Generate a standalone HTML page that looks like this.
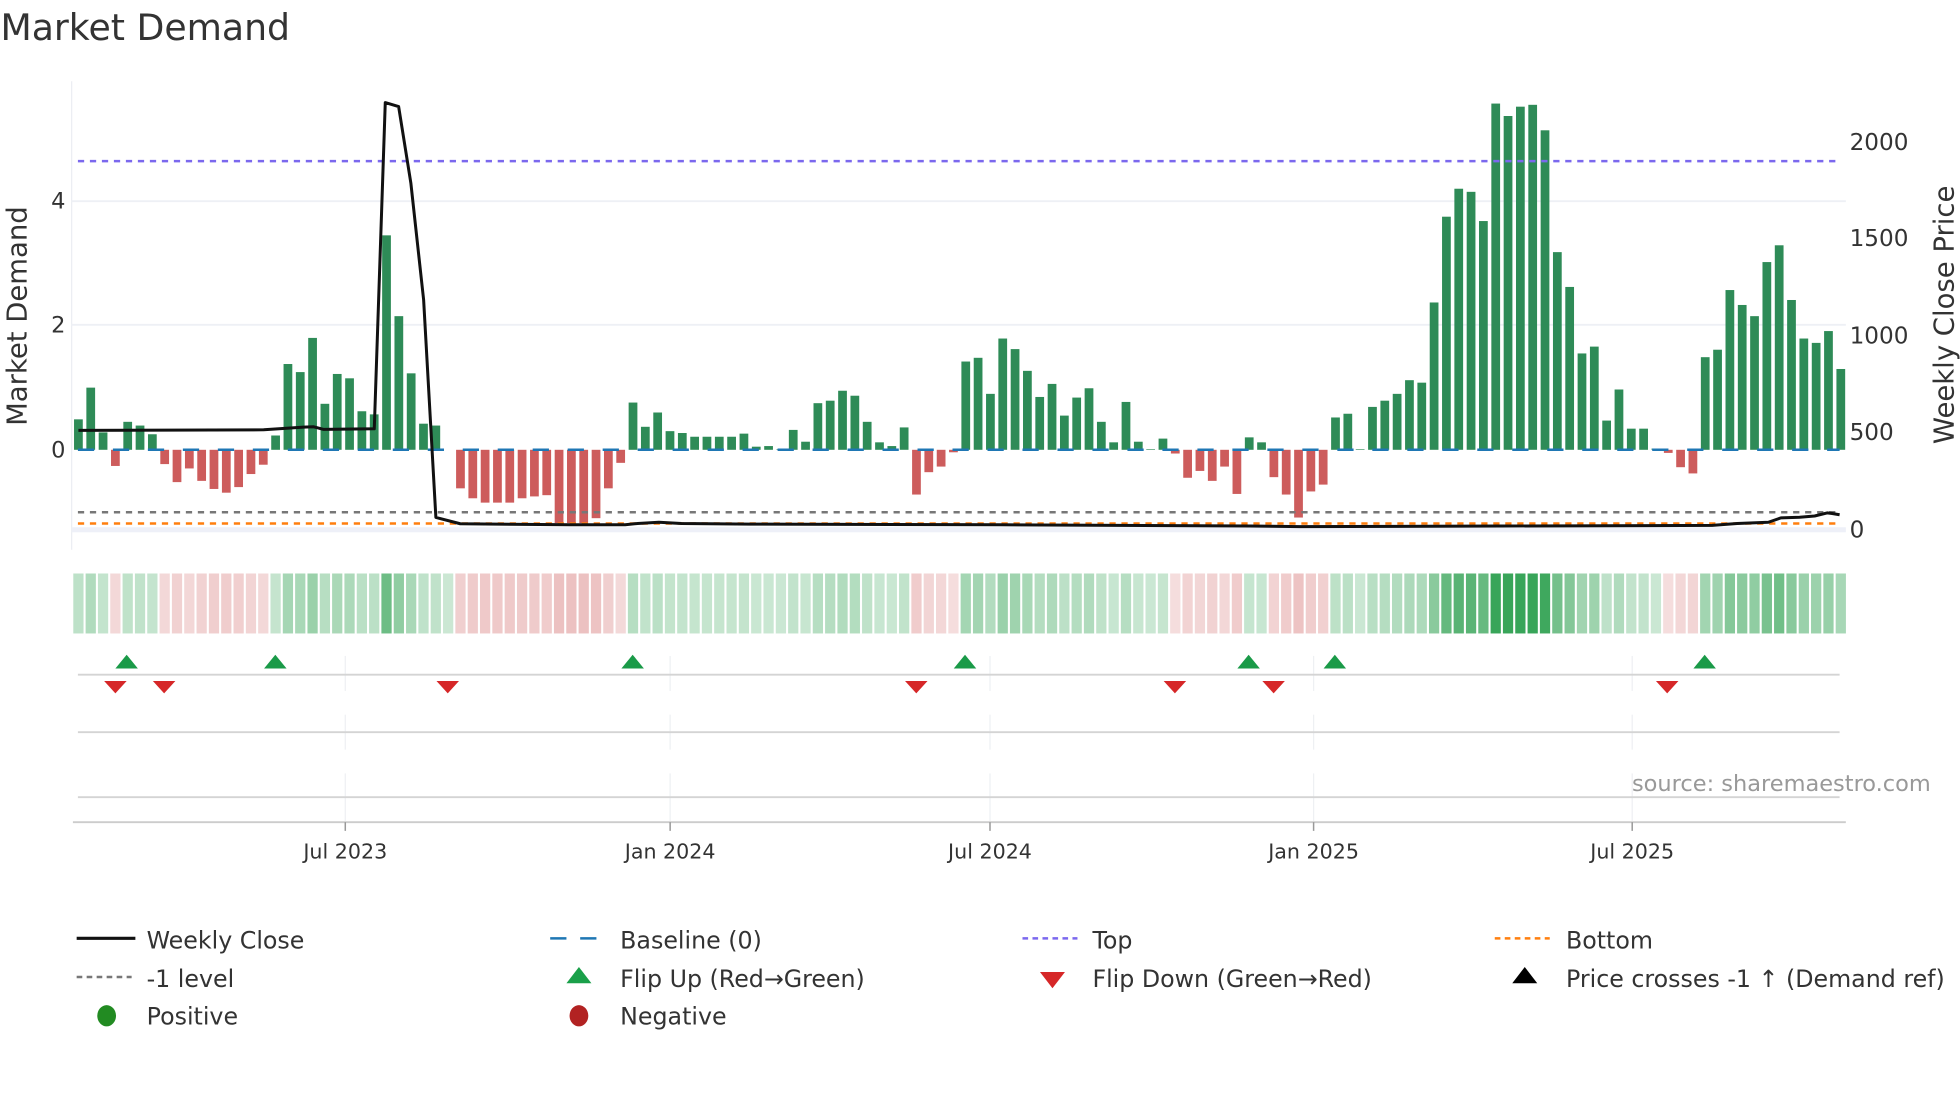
<!DOCTYPE html>
<html><head><meta charset="utf-8">
<style>
html,body{margin:0;padding:0;background:#fff;}
svg{display:block;}
text{font-family:"DejaVu Sans","Liberation Sans",sans-serif;fill:#333;}
</style></head>
<body>
<svg id="s" width="1960" height="1102" viewBox="0 0 1568 882" xmlns="http://www.w3.org/2000/svg">
<text x="0" y="32" font-size="29">Market Demand</text>
<line x1="57" y1="65" x2="57" y2="440" stroke="#eceef3" stroke-width="1"/>
<rect x="57" y="422" width="1420" height="4" fill="#eef0f8"/>
<line x1="57" y1="161" x2="1477" y2="161" stroke="#eef0f5" stroke-width="1.5"/>
<line x1="57" y1="260" x2="1477" y2="260" stroke="#eef0f5" stroke-width="1.5"/>
<g id="bars"></g>
<line x1="62" y1="360" x2="1472" y2="360" stroke="#1f77b4" stroke-width="2" stroke-dasharray="13,15"/>
<line x1="62" y1="129" x2="1470" y2="129" stroke="#7b68ee" stroke-width="2" stroke-dasharray="5,4.6"/>
<line x1="62" y1="410" x2="1470" y2="410" stroke="#777" stroke-width="2" stroke-dasharray="5,4.6"/>
<line x1="62" y1="419" x2="1470" y2="419" stroke="#ff7f0e" stroke-width="2" stroke-dasharray="5,4.6"/>
<polyline id="price" fill="none" stroke="#111" stroke-width="2.4" stroke-linejoin="round"/>
<text x="52" y="167" font-size="18" text-anchor="end">4</text>
<text x="52" y="266" font-size="18" text-anchor="end">2</text>
<text x="52" y="366" font-size="18" text-anchor="end">0</text>
<text transform="translate(21,253) rotate(-90)" font-size="22" text-anchor="middle">Market Demand</text>
<text x="1480" y="120" font-size="18.5">2000</text>
<text x="1480" y="197" font-size="18.5">1500</text>
<text x="1480" y="275" font-size="18.5">1000</text>
<text x="1480" y="352" font-size="18.5">500</text>
<text x="1480" y="430" font-size="18.5">0</text>
<text transform="translate(1563,252) rotate(-90)" font-size="22" text-anchor="middle">Weekly Close Price</text>
<g id="heat"></g>
<g stroke="#eef0f3" stroke-width="1">
<line x1="276" y1="525" x2="276" y2="553"/><line x1="536" y1="525" x2="536" y2="553"/><line x1="792" y1="525" x2="792" y2="553"/><line x1="1051" y1="525" x2="1051" y2="553"/><line x1="1306" y1="525" x2="1306" y2="553"/>
<line x1="276" y1="572" x2="276" y2="600"/><line x1="536" y1="572" x2="536" y2="600"/><line x1="792" y1="572" x2="792" y2="600"/><line x1="1051" y1="572" x2="1051" y2="600"/><line x1="1306" y1="572" x2="1306" y2="600"/>
<line x1="276" y1="619" x2="276" y2="657"/><line x1="536" y1="619" x2="536" y2="657"/><line x1="792" y1="619" x2="792" y2="657"/><line x1="1051" y1="619" x2="1051" y2="657"/><line x1="1306" y1="619" x2="1306" y2="657"/>
</g>
<line x1="62" y1="540" x2="1472" y2="540" stroke="#d4d4d4" stroke-width="1.5"/>
<line x1="62" y1="586" x2="1472" y2="586" stroke="#d4d4d4" stroke-width="1.5"/>
<line x1="62" y1="638" x2="1472" y2="638" stroke="#d4d4d4" stroke-width="1.5"/>
<line x1="58" y1="658" x2="1477" y2="658" stroke="#ccc" stroke-width="1.5"/>
<g stroke="#999" stroke-width="1.2">
<line x1="276" y1="658" x2="276" y2="665"/><line x1="536" y1="658" x2="536" y2="665"/><line x1="792" y1="658" x2="792" y2="665"/><line x1="1051" y1="658" x2="1051" y2="665"/><line x1="1306" y1="658" x2="1306" y2="665"/>
</g>
<g id="marks"></g>
<text x="1545" y="633" font-size="18" text-anchor="end" style="fill:#999">source: sharemaestro.com</text>
<g font-size="16.5" text-anchor="middle">
<text x="276" y="687">Jul 2023</text><text x="536" y="687">Jan 2024</text><text x="792" y="687">Jul 2024</text><text x="1051" y="687">Jan 2025</text><text x="1306" y="687">Jul 2025</text>
</g>
<g font-size="19">
<line x1="61" y1="751" x2="108" y2="751" stroke="#111" stroke-width="2.5"/>
<text x="117" y="759">Weekly Close</text>
<line x1="440" y1="751" x2="484" y2="751" stroke="#1f77b4" stroke-width="2" stroke-dasharray="13,11"/>
<text x="496" y="759">Baseline (0)</text>
<line x1="818" y1="751" x2="862" y2="751" stroke="#7b68ee" stroke-width="2" stroke-dasharray="4.5,3.5"/>
<text x="874" y="759">Top</text>
<line x1="1196" y1="751" x2="1240" y2="751" stroke="#ff7f0e" stroke-width="2" stroke-dasharray="4.5,3.5"/>
<text x="1253" y="759">Bottom</text>
<line x1="61" y1="782" x2="105" y2="782" stroke="#777" stroke-width="2" stroke-dasharray="4.5,3.5"/>
<text x="117" y="790">-1 level</text>
<polygon points="463,774 473,787 453,787" fill="#1aa04a"/>
<text x="496" y="790">Flip Up (Red→Green)</text>
<polygon points="832,778 852,778 842,791" fill="#d62728"/>
<text x="874" y="790">Flip Down (Green→Red)</text>
<polygon points="1220,774 1230,787 1210,787" fill="#000"/>
<text x="1253" y="790">Price crosses -1 ↑ (Demand ref)</text>
<ellipse cx="85" cy="813" rx="7.5" ry="8.5" fill="#228b22"/>
<text x="117" y="820">Positive</text>
<ellipse cx="463" cy="813" rx="7.5" ry="8.5" fill="#b22222"/>
<text x="496" y="820">Negative</text>
</g>
</svg>
<script>
var v=[0.49,1.0,0.28,-0.26,0.45,0.39,0.25,-0.23,-0.52,-0.3,-0.5,-0.63,-0.69,-0.6,-0.39,-0.24,0.23,1.38,1.25,1.8,0.74,1.22,1.15,0.62,0.57,3.45,2.15,1.23,0.42,0.39,0,-0.62,-0.78,-0.85,-0.85,-0.85,-0.78,-0.75,-0.73,-1.18,
-1.18,-1.18,-1.1,-0.62,-0.21,0.76,0.37,0.6,0.3,0.27,0.21,0.21,0.21,0.21,0.26,0.05,0.06,0.01,0.32,0.13,0.75,0.79,0.95,0.87,0.45,0.12,0.06,0.36,-0.72,-0.36,-0.27,-0.04,1.42,1.48,0.9,1.79,1.62,1.27,0.85,1.06,
0.55,0.84,0.99,0.45,0.12,0.77,0.13,0.01,0.18,-0.06,-0.45,-0.34,-0.5,-0.27,-0.71,0.2,0.12,-0.44,-0.72,-1.09,-0.67,-0.56,0.52,0.58,0.01,0.69,0.79,0.9,1.12,1.08,2.37,3.75,4.2,4.15,3.68,5.57,5.37,5.52,5.55,5.14,
3.18,2.62,1.55,1.66,0.47,0.97,0.34,0.34,0.02,-0.05,-0.28,-0.38,1.49,1.61,2.57,2.33,2.15,3.02,3.29,2.41,1.79,1.72,1.91,1.3];
var NS="http://www.w3.org/2000/svg",x0=62.4,p=9.864,u=49.75;
function el(t,a,par){var e=document.createElementNS(NS,t);for(var k in a)e.setAttribute(k,a[k]);document.getElementById(par).appendChild(e);return e;}
for(var i=0;i<v.length;i++){
 var c=x0+i*p,h=Math.abs(v[i])*u;
 if(h>0.3)el("rect",{x:c-3.5,y:v[i]>0?360-h:360,width:7,height:h,fill:v[i]>0?"#2e8b57":"#cd5c5c"},"bars");
 var col;
 if(v[i]>=0){var a=Math.min(0.25+0.13*v[i],0.95);col="rgb("+Math.round(255-(255-46)*a)+","+Math.round(255-(255-160)*a)+","+Math.round(255-(255-80)*a)+")";}
 else{var a=Math.min(0.2+0.15*(-v[i]),0.5);col="rgb("+Math.round(255-(255-205)*a)+","+Math.round(255-(255-90)*a)+","+Math.round(255-(255-90)*a)+")";}
 el("rect",{x:c-4.1,y:459,width:8.2,height:48,fill:col},"heat");
}
function zx(z){return (70+z/3)/1.25;} function zy(z){return (80+z/3)/1.25;}
var pts=[[24,1052],[580,1050],[700,1042],[730,1041],[760,1049],[912,1047],[945,68],[985,80],[1022,310],[1060,660],[1097,1313],[1170,1332],[1500,1335]];
var s=pts.map(function(q){return zx(q[0]).toFixed(1)+","+zy(q[1]).toFixed(1);});
s=s.concat(["500,420","510,419","527,418","545,419","600,419.5","800,420","1000,421","1040,421.5","1200,421","1370,420.5","1390,419","1415,418","1425,414.5","1440,414","1452,413","1462,410.5","1466,411","1472,412"]);
document.getElementById("price").setAttribute("points",s.join(" "));
[101,220,506,772,999,1068,1364].forEach(function(x){el("polygon",{points:(x)+",524 "+(x+9)+",535 "+(x-9)+",535",fill:"#1a9a48"},"marks");});
[92,131,358,733,940,1019,1334].forEach(function(x){el("polygon",{points:(x-9)+",545 "+(x+9)+",545 "+x+",555",fill:"#d62728"},"marks");});
</script>
</body></html>
